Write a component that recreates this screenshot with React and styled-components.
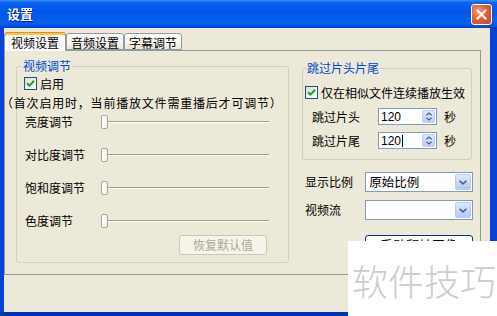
import React from "react";
import styled, { createGlobalStyle } from "styled-components";

const Global = createGlobalStyle`
  html, body { margin: 0; padding: 0; background: #fff; }
  #root { width: 497px; height: 316px; }
  * { box-sizing: border-box; }
`;

const CJK = `"Noto Sans CJK SC", "Noto Sans", sans-serif`;

const Window = styled.div`
  position: relative;
  width: 497px;
  height: 316px;
  display: flex;
  flex-direction: column;
  background: #0842d6;
  font-family: ${CJK};
  font-size: 12px;
  line-height: 12px;
  color: #000;
  overflow: hidden;
`;

const TitleBar = styled.div`
  flex: none;
  height: 28px;
  display: flex;
  align-items: center;
  justify-content: space-between;
  padding: 0 5px 0 7px;
  background: linear-gradient(180deg, #3d8ff8 0%, #0c63f2 9%, #0056e6 40%, #0560f0 82%, #0553e4 92%, #003cc4 100%);
`;

const Title = styled.span`
  color: #fff;
  font-weight: 700;
  font-size: 13px;
  line-height: 14px;
  text-shadow: 1px 1px 0 #0a1883;
`;

const CloseButton = styled.div`
  width: 21px;
  height: 21px;
  border: 1px solid #fff;
  border-radius: 3px;
  display: flex;
  align-items: center;
  justify-content: center;
  background: radial-gradient(circle at 35% 35%, #f3a07f 0%, #e2613a 45%, #c74522 100%);
`;

const Frame = styled.div`
  flex: 1;
  display: flex;
  padding: 0 7px 0 4px;
  border-bottom: 4px solid #0032b8;
`;

const Body = styled.div`
  flex: 1;
  display: flex;
  flex-direction: column;
  padding: 4px 9px 0 0;
  background: #ece9d8;
`;

const TabRow = styled.div`
  display: flex;
  align-items: flex-end;
  height: 19px;
  margin-bottom: -1px;
  position: relative;
  z-index: 1;
`;

const Tab = styled.div`
  height: ${(p) => (p.$active ? 19 : 17)}px;
  margin-bottom: ${(p) => (p.$active ? 0 : 1)}px;
  padding: 2px ${(p) => (p.$active ? 6 : 4)}px 0;
  display: flex;
  align-items: center;
  border: 1px solid #919b9c;
  border-bottom: ${(p) => (p.$active ? "none" : "1px solid #919b9c")};
  border-top-color: ${(p) => (p.$active ? "#e68b2c" : "#919b9c")};
  border-radius: 3px 3px 0 0;
  box-shadow: ${(p) => (p.$active ? "inset 0 2px 0 #ffc83c" : "none")};
  background: ${(p) => (p.$active ? "#fcfcfe" : "linear-gradient(180deg, #ffffff, #f3f2ec 70%, #e6e4da)")};
  white-space: nowrap;
`;

const Panel = styled.div`
  flex: none;
  height: 225px;
  border: 1px solid #919b9c;
  background: #ece9d8;
  display: flex;
  align-items: flex-start;
  gap: 13px;
  padding: 9px 0 0 11px;
`;

const Group = styled.fieldset`
  margin: ${(p) => p.$top || 0}px 0 0 0;
  padding: 0;
  width: ${(p) => p.$w}px;
  border: 1px solid #d0d0bf;
  border-radius: 3px;
  min-width: 0;
`;

const Legend = styled.legend`
  margin-left: ${(p) => p.$ml}px;
  padding: 0 1px;
  color: #0046d5;
  font-size: 12px;
  line-height: 12px;
`;

const GroupContent = styled.div`
  display: flex;
  flex-direction: column;
  padding: ${(p) => p.$pad};
`;

const CheckRow = styled.label`
  display: flex;
  align-items: center;
  gap: 3px;
  height: 13px;
  margin-left: ${(p) => p.$ml || 0}px;
  white-space: nowrap;
`;

const Box = styled.span`
  width: 13px;
  height: 13px;
  flex: none;
  border: 1px solid #1c5180;
  background: linear-gradient(135deg, #dcdcd7, #ffffff);
  display: flex;
  align-items: center;
  justify-content: center;
`;

const Note = styled.div`
  margin: 7px 0 0 -24px;
  letter-spacing: 0.8px;
  white-space: nowrap;
`;

const SliderList = styled.div`
  display: flex;
  flex-direction: column;
  gap: 17px;
  margin-top: 5px;
`;

const SliderRow = styled.div`
  display: flex;
  align-items: center;
  height: 16px;
`;

const SliderLabel = styled.span`
  width: 76px;
  flex: none;
  white-space: nowrap;
`;

const Track = styled.div`
  width: 169px;
  height: 16px;
  display: flex;
  align-items: center;
  background:
    linear-gradient(#9d9c96, #9d9c96) 2px 7px / 166px 1px no-repeat,
    linear-gradient(#ffffff, #ffffff) 2px 8px / 166px 1px no-repeat;
`;

const Thumb = styled.div`
  width: 7px;
  height: 14px;
  border: 1px solid #a9a69a;
  border-radius: 2px;
  background: linear-gradient(90deg, #ffffff, #f2f0e6);
`;

const DisabledButton = styled.div`
  align-self: flex-end;
  margin: 6px 21px 0 0;
  width: 88px;
  height: 20px;
  border: 1px solid #c9c7ba;
  border-radius: 3px;
  background: #f5f4ea;
  color: #aca899;
  display: flex;
  align-items: center;
  justify-content: center;
`;

const RightColumn = styled.div`
  width: 171px;
  display: flex;
  flex-direction: column;
`;

const SpinRow = styled.div`
  display: flex;
  align-items: center;
  height: 17px;
  margin-top: ${(p) => p.$mt}px;
`;

const SpinLabel = styled.span`
  width: 66px;
  margin-left: 7px;
  white-space: nowrap;
`;

const SpinBox = styled.div`
  width: 59px;
  height: 17px;
  border: 1px solid #7f9db9;
  background: #fff;
  display: flex;
  align-items: center;
  justify-content: space-between;
  padding: 1px 1px 1px 2px;
`;

const SpinValue = styled.span`
  font-family: "Liberation Sans", Arial, sans-serif;
  font-size: 12px;
  display: flex;
  align-items: center;
`;

const Caret = styled.span`
  width: 1px;
  height: 12px;
  background: #000;
  margin-left: 1px;
`;

const SpinButtons = styled.div`
  width: 13px;
  height: 13px;
  border-radius: 2px;
  background: linear-gradient(180deg, #dce6fd, #bccdf6);
  border: 1px solid #c3d1f5;
  display: flex;
  flex-direction: column;
  align-items: center;
  justify-content: center;
  gap: 1px;
`;

const Unit = styled.span`
  margin-left: 7px;
`;

const SelectRow = styled.div`
  display: flex;
  align-items: center;
  margin-top: ${(p) => p.$mt}px;
`;

const SelectLabel = styled.span`
  width: 61px;
  margin-left: 3px;
  white-space: nowrap;
`;

const Select = styled.div`
  width: 109px;
  height: 20px;
  border: 1px solid #7f9db9;
  background: #fff;
  display: flex;
  align-items: center;
  justify-content: space-between;
  padding: 1px;
`;

const SelectText = styled.span`
  padding-left: 2px;
  font-size: 12.5px;
`;

const DropButton = styled.div`
  width: 16px;
  height: 16px;
  border: 1px solid #b9caf5;
  border-radius: 2px;
  background: linear-gradient(180deg, #e1eafe, #b4c8f6);
  display: flex;
  align-items: center;
  justify-content: center;
`;

const Button = styled.div`
  margin: 15px 0 0 63px;
  width: 108px;
  height: 23px;
  border: 1px solid #003c74;
  border-radius: 3px;
  background: linear-gradient(180deg, #ffffff, #f3f2ec 80%, #d6d0c5);
  display: flex;
  align-items: flex-start;
  justify-content: center;
  padding-top: 2px;
  font-size: 13px;
  line-height: 13px;
`;

const Watermark = styled.div`
  position: absolute;
  left: 348px;
  top: 241px;
  right: 0;
  bottom: 0;
  background: #fff;
  display: flex;
  align-items: center;
  justify-content: flex-start;
  padding: 2px 0 0 4px;
  color: #cdcdcd;
  font-size: 36px;
  line-height: 36px;
  font-weight: 300;
  white-space: nowrap;
`;

const Check = () => (
  <svg width="9" height="9" viewBox="0 0 9 9">
    <path d="M1 4.2 L3.5 6.6 L8 1.8" fill="none" stroke="#21a121" strokeWidth="2" />
  </svg>
);

const Chevron = ({ up, w = 7, h = 4 }) => (
  <svg width={w} height={h} viewBox="0 0 7 4">
    <path d={up ? "M0.5 3.5 L3.5 0.8 L6.5 3.5" : "M0.5 0.5 L3.5 3.2 L6.5 0.5"} fill="none" stroke="#4d6185" strokeWidth="1.4" />
  </svg>
);

const sliders = ["亮度调节", "对比度调节", "饱和度调节", "色度调节"];

export default function App() {
  return (
    <>
      <Global />
      <Window>
        <TitleBar>
          <Title>设置</Title>
          <CloseButton>
            <svg width="11" height="11" viewBox="0 0 11 11">
              <path d="M1.5 1.5 L9.5 9.5 M9.5 1.5 L1.5 9.5" stroke="#fff" strokeWidth="2" strokeLinecap="square" />
            </svg>
          </CloseButton>
        </TitleBar>
        <Frame>
          <Body>
            <TabRow>
              <Tab $active>视频设置</Tab>
              <Tab>音频设置</Tab>
              <Tab>字幕调节</Tab>
            </TabRow>
            <Panel>
              <Group $w={273}>
                <Legend $ml={5}>视频调节</Legend>
                <GroupContent $pad="5px 0 7px 8px">
                  <CheckRow $ml={-1}>
                    <Box><Check /></Box>
                    启用
                  </CheckRow>
                  <Note>（首次启用时，当前播放文件需重播后才可调节）</Note>
                  <SliderList>
                    {sliders.map((s) => (
                      <SliderRow key={s}>
                        <SliderLabel>{s}</SliderLabel>
                        <Track>
                          <Thumb />
                        </Track>
                      </SliderRow>
                    ))}
                  </SliderList>
                  <DisabledButton>恢复默认值</DisabledButton>
                </GroupContent>
              </Group>
              <RightColumn>
                <Group $w={170} $top={2}>
                  <Legend $ml={3}>跳过片头片尾</Legend>
                  <GroupContent $pad="12px 0 10px 2px">
                    <CheckRow>
                      <Box><Check /></Box>
                      仅在相似文件连续播放生效
                    </CheckRow>
                    <SpinRow $mt={9}>
                      <SpinLabel>跳过片头</SpinLabel>
                      <SpinBox>
                        <SpinValue>120</SpinValue>
                        <SpinButtons>
                          <Chevron up w={6} h={4} />
                          <Chevron w={6} h={4} />
                        </SpinButtons>
                      </SpinBox>
                      <Unit>秒</Unit>
                    </SpinRow>
                    <SpinRow $mt={7}>
                      <SpinLabel>跳过片尾</SpinLabel>
                      <SpinBox>
                        <SpinValue>120<Caret /></SpinValue>
                        <SpinButtons>
                          <Chevron up w={6} h={4} />
                          <Chevron w={6} h={4} />
                        </SpinButtons>
                      </SpinBox>
                      <Unit>秒</Unit>
                    </SpinRow>
                  </GroupContent>
                </Group>
                <SelectRow $mt={12}>
                  <SelectLabel>显示比例</SelectLabel>
                  <Select>
                    <SelectText>原始比例</SelectText>
                    <DropButton><Chevron w={8} h={5} /></DropButton>
                  </Select>
                </SelectRow>
                <SelectRow $mt={8}>
                  <SelectLabel>视频流</SelectLabel>
                  <Select>
                    <SelectText />
                    <DropButton><Chevron w={8} h={5} /></DropButton>
                  </Select>
                </SelectRow>
                <Button>手动翻转图像</Button>
              </RightColumn>
            </Panel>
          </Body>
        </Frame>
        <Watermark>软件技巧</Watermark>
      </Window>
    </>
  );
}
